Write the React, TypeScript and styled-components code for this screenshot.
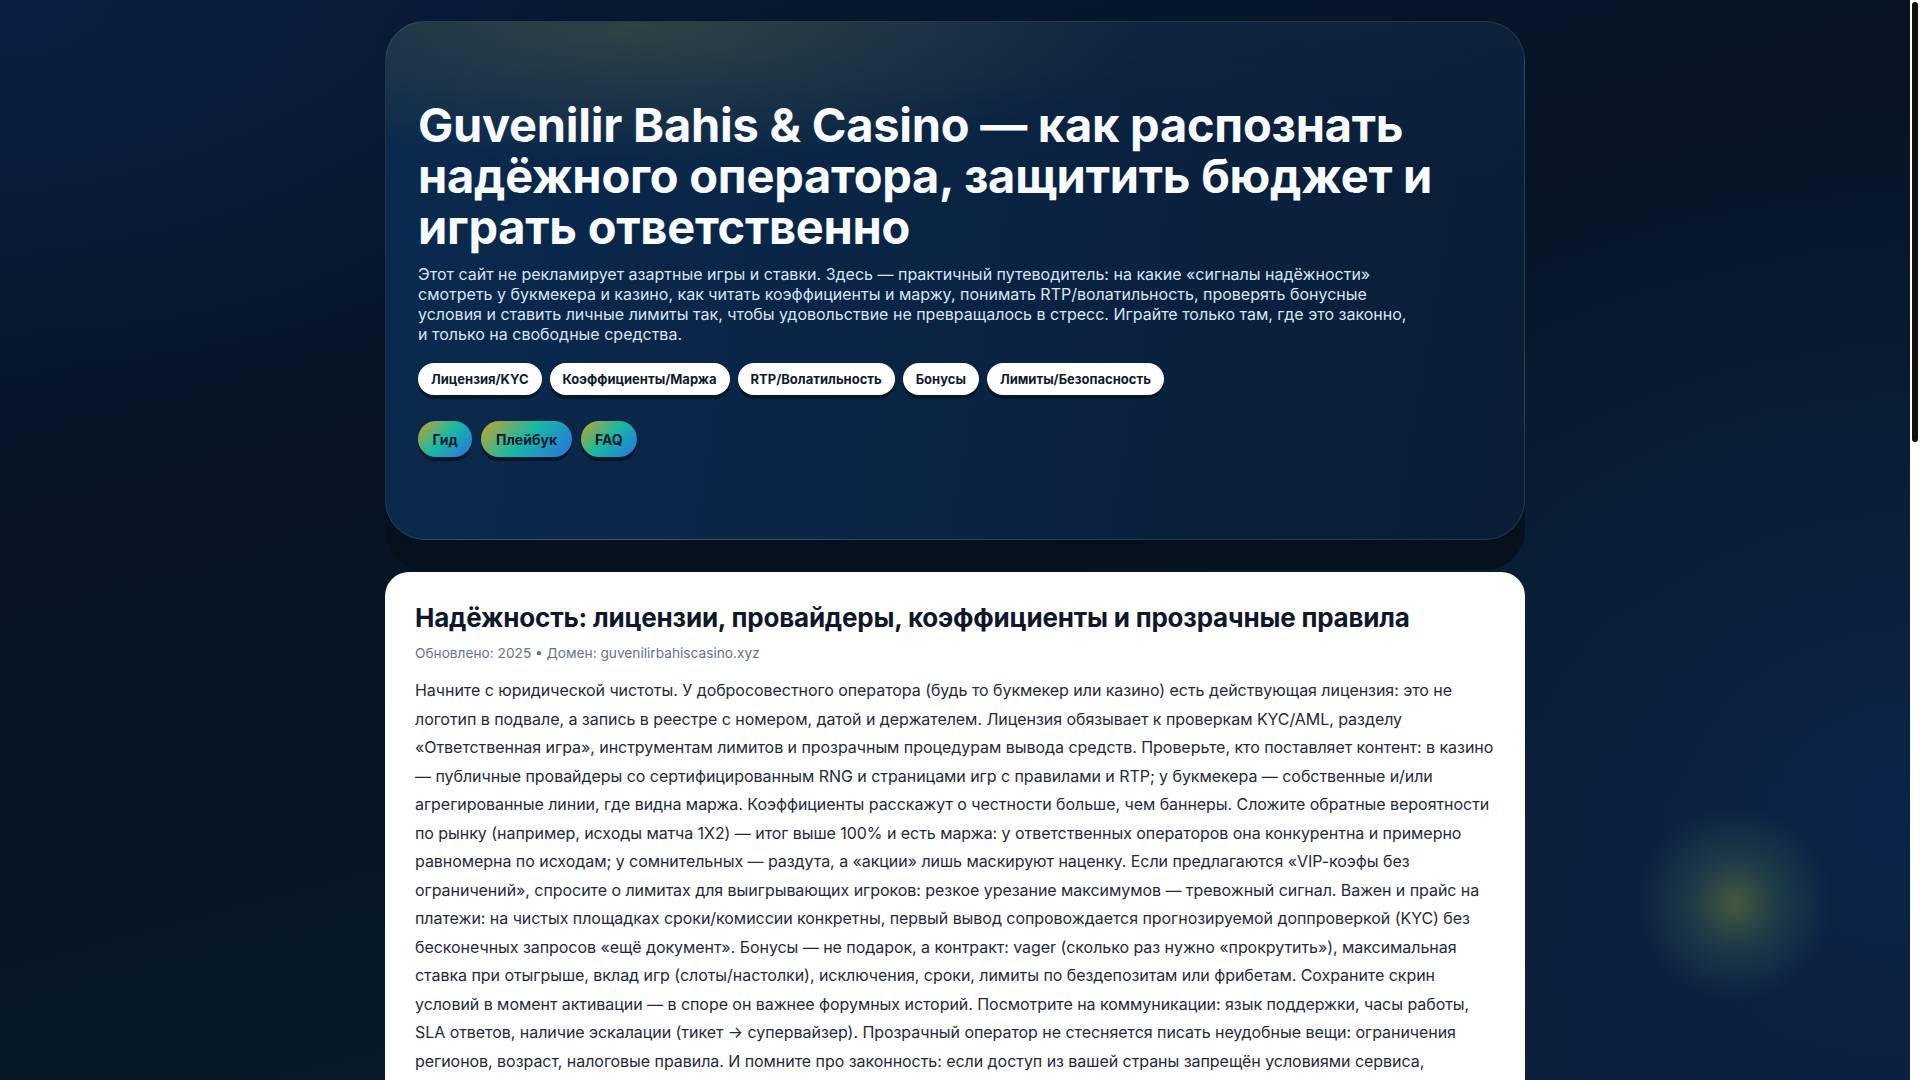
import React from "react";
import styled, { createGlobalStyle } from "styled-components";

const Global = createGlobalStyle`
  html {
    background: #071626;
  }
  body {
    margin: 0;
    padding-right: 10px;
    min-height: 100vh;
    font-family: Inter, "Noto Sans", "Liberation Sans", sans-serif;
    background:
      radial-gradient(circle 98px at 1735px 903px, rgba(72, 92, 62, 0.95) 0%, rgba(44, 78, 76, 0.55) 45%, rgba(11, 36, 70, 0) 100%),
      radial-gradient(ellipse 900px 700px at 100% 75%, #0b2448 0%, rgba(11, 36, 72, 0) 100%),
      radial-gradient(ellipse 700px 400px at 0% 0%, #0b1e42 0%, rgba(11, 30, 66, 0) 100%),
      linear-gradient(165deg, #081a33 0%, #061424 35%, #071827 70%, #0a1c36 100%);
    background-attachment: fixed;
    color: #0f172a;
  }
  * { box-sizing: border-box; }
`;

const ScrollTrack = styled.div`
  position: fixed;
  top: 0;
  right: 0;
  width: 10px;
  height: 100vh;
  background: #ffffff;
  z-index: 10;
`;

const ScrollThumb = styled.div`
  margin: 2px 0 0 2px;
  width: 6px;
  height: 440px;
  border-radius: 3px;
  background: #111111;
`;

const Page = styled.div`
  max-width: 1140px;
  margin: 0 auto;
  padding: 21px 0 80px;
  display: flex;
  flex-direction: column;
  gap: 32px;
`;

const Hero = styled.header`
  border-radius: 40px;
  padding: 78px 32px 82px;
  border: 1px solid rgba(255, 255, 255, 0.1);
  background:
    radial-gradient(ellipse 520px 140px at 22% 0%, rgba(90, 100, 70, 0.45) 0%, rgba(60, 80, 70, 0) 100%),
    linear-gradient(180deg, rgba(20, 40, 60, 0.35) 0%, rgba(10, 40, 80, 0) 30%),
    linear-gradient(100deg, #0a2a4f 0%, #0a2546 40%, #0a213e 70%, #0b1d37 100%);
  box-shadow: 0 30px 0 #05111d;
  color: #f8fafc;
`;

const Title = styled.h1`
  margin: 0 0 12px;
  font-size: 47px;
  line-height: 1.08;
  font-weight: 700;
  letter-spacing: -0.25px;
  max-width: 1030px;
  color: #f8fbff;
`;

const Lead = styled.p`
  margin: 0 0 19px;
  font-size: 16px;
  line-height: 20px;
  color: #d9e4f2;
  max-width: 1000px;
`;

const ChipRow = styled.nav`
  display: flex;
  flex-wrap: wrap;
  gap: 8px;
  margin-bottom: 26px;
`;

const Chip = styled.a`
  display: inline-flex;
  align-items: center;
  height: 32px;
  padding: 0 13px;
  border-radius: 999px;
  background: #ffffff;
  color: #0f1b2d;
  font-size: 13px;
  font-weight: 700;
  text-decoration: none;
  box-shadow: 0 4px 0 rgba(3, 12, 24, 0.55);
`;

const ActionRow = styled.div`
  display: flex;
  gap: 9px;
`;

const Action = styled.a`
  display: inline-flex;
  align-items: center;
  height: 36px;
  padding: 0 14.5px;
  border-radius: 999px;
  background: linear-gradient(135deg, #c9a227 0%, #18b9a4 48%, #2a6fe0 100%);
  color: #0b1a2e;
  font-size: 14px;
  font-weight: 700;
  text-decoration: none;
  box-shadow: 0 4px 0 rgba(3, 12, 24, 0.6);
`;

const Card = styled.article`
  background: #ffffff;
  border-radius: 24px;
  padding: 29px 26px 40px 30px;
`;

const Heading = styled.h2`
  margin: 0 0 10px;
  font-size: 26px;
  line-height: 1.3;
  font-weight: 700;
  color: #0f172a;
  letter-spacing: -0.2px;
`;

const Meta = styled.div`
  font-size: 13.7px;
  color: #64748b;
  margin-bottom: 15px;
`;

const Body = styled.p`
  margin: 0 0 18px;
  font-size: 16px;
  line-height: 28.5px;
  letter-spacing: -0.05px;
  color: #1f2a3a;
`;

const chips = ["Лицензия/KYC", "Коэффициенты/Маржа", "RTP/Волатильность", "Бонусы", "Лимиты/Безопасность"];
const actions = ["Гид", "Плейбук", "FAQ"];

export default function App() {
  return (
    <>
      <Global />
      <ScrollTrack>
        <ScrollThumb />
      </ScrollTrack>
      <Page>
        <Hero>
          <Title>Guvenilir Bahis &amp; Casino — как распознать надёжного оператора, защитить бюджет и играть ответственно</Title>
          <Lead>
            Этот сайт не рекламирует азартные игры и ставки. Здесь — практичный путеводитель: на какие «сигналы надёжности» смотреть у букмекера и казино, как читать коэффициенты и маржу, понимать RTP/волатильность, проверять бонусные условия и ставить личные лимиты так, чтобы удовольствие не превращалось в стресс. Играйте только там, где это законно, и только на свободные средства.
          </Lead>
          <ChipRow>
            {chips.map((c) => (
              <Chip key={c} href="#">{c}</Chip>
            ))}
          </ChipRow>
          <ActionRow>
            {actions.map((a) => (
              <Action key={a} href="#">{a}</Action>
            ))}
          </ActionRow>
        </Hero>
        <Card>
          <Heading>Надёжность: лицензии, провайдеры, коэффициенты и прозрачные правила</Heading>
          <Meta>Обновлено: 2025 • Домен: guvenilirbahiscasino.xyz</Meta>
          <Body>
            Начните с юридической чистоты. У добросовестного оператора (будь то букмекер или казино) есть действующая лицензия: это не логотип в подвале, а запись в реестре с номером, датой и держателем. Лицензия обязывает к проверкам KYC/AML, разделу «Ответственная игра», инструментам лимитов и прозрачным процедурам вывода средств. Проверьте, кто поставляет контент: в казино — публичные провайдеры со сертифицированным RNG и страницами игр с правилами и RTP; у букмекера — собственные и/или агрегированные линии, где видна маржа. Коэффициенты расскажут о честности больше, чем баннеры. Сложите обратные вероятности по рынку (например, исходы матча 1X2) — итог выше 100% и есть маржа: у ответственных операторов она конкурентна и примерно равномерна по исходам; у сомнительных — раздута, а «акции» лишь маскируют наценку. Если предлагаются «VIP-коэфы без ограничений», спросите о лимитах для выигрывающих игроков: резкое урезание максимумов — тревожный сигнал. Важен и прайс на платежи: на чистых площадках сроки/комиссии конкретны, первый вывод сопровождается прогнозируемой доппроверкой (KYC) без бесконечных запросов «ещё документ». Бонусы — не подарок, а контракт: vager (сколько раз нужно «прокрутить»), максимальная ставка при отыгрыше, вклад игр (слоты/настолки), исключения, сроки, лимиты по бездепозитам или фрибетам. Сохраните скрин условий в момент активации — в споре он важнее форумных историй. Посмотрите на коммуникации: язык поддержки, часы работы, SLA ответов, наличие эскалации (тикет → супервайзер). Прозрачный оператор не стесняется писать неудобные вещи: ограничения регионов, возраст, налоговые правила. И помните про законность: если доступ из вашей страны запрещён условиями сервиса, воздержитесь от игры и не пытайтесь обходить ограничения через VPN — это риск блокировки счёта и потери средств.
          </Body>
          <Body>
            Ответственная игра — это набор инструментов, а не лозунг. Установите депозитный лимит на день, неделю и месяц, включите напоминания о времени сессии и заранее определите сумму, которую готовы потерять без ущерба для бюджета. Если игра перестаёт приносить удовольствие, воспользуйтесь тайм-аутом или самоисключением и обратитесь в профильные службы поддержки. Никогда не пытайтесь «отыграться», не берите кредиты на ставки и не играйте в состоянии усталости или стресса.
          </Body>
          <Body>
            RTP показывает теоретический возврат игроку на длинной дистанции, а волатильность — насколько неравномерно распределены выигрыши. Высокий RTP не гарантирует результат конкретной сессии, а высокая волатильность означает длинные серии без выигрышей. Выбирайте игры, понимая их математику, и помните: у казино всегда есть преимущество.
          </Body>
        </Card>
      </Page>
    </>
  );
}
